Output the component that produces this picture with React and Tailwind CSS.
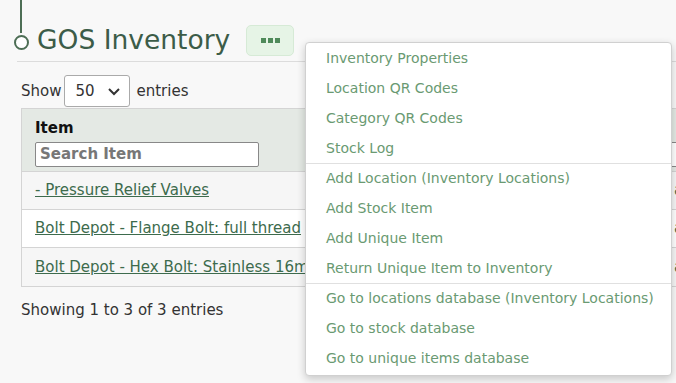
import React from "react";

const font = { fontFamily: "'DejaVu Sans', sans-serif" };

function MenuItem({ children }) {
  return (
    <div className="h-[29.75px] flex items-center pl-[20px] text-[14px] text-[#6a9a72] whitespace-nowrap">
      {children}
    </div>
  );
}

export default function App() {
  return (
    <div className="relative w-[676px] h-[383px] overflow-hidden bg-[#f8f8f8] text-[#333]" style={font}>
      {/* timeline line */}
      <div className="absolute left-[20px] top-0 w-[2px] h-[33px] bg-[#4d6e55]" />
      <div className="pl-[14px] pt-[22px]">
        <div className="flex items-center">
          <div className="w-[15px] h-[15px] rounded-full border-2 border-[#4d6e55] bg-white mt-[4px]" />
          <h1 className="ml-[8px] text-[26.5px] leading-[36px] text-[#3c5c48]">GOS Inventory</h1>
          <button className="ml-[16px] w-[48px] h-[31px] rounded-[5px] bg-[#e6f4e6] border border-[#d6ead6] flex items-center justify-center gap-[2px]">
            <span className="w-[5px] h-[5px] bg-[#4f8a5a]" />
            <span className="w-[5px] h-[5px] bg-[#4f8a5a]" />
            <span className="w-[5px] h-[5px] bg-[#4f8a5a]" />
          </button>
        </div>
        <div className="ml-[3px] mt-[3px] h-px bg-[#dcdcdc]" />
      </div>

      <div className="pl-[21px] mt-[13px] flex items-center text-[15px]">
        <span>Show</span>
        <div className="ml-[3px] w-[66px] h-[32px] rounded-[3px] border border-[#aaa] bg-white flex items-center pl-[10px] pr-[8px] justify-between">
          <span>50</span>
          <svg width="14" height="9" viewBox="0 0 14 9"><path d="M2 2 L7 7 L12 2" fill="none" stroke="#333" strokeWidth="2" /></svg>
        </div>
        <span className="ml-[6px]">entries</span>
      </div>

      {/* table */}
      <div className="ml-[21px] mt-px w-[700px] border border-[#d4d4d4] text-[15px]">
        <div className="flex h-[63px] bg-[#e4e9e4] border-b border-[#d4d4d4]">
          <div className="w-[639px] pl-[13px] pt-[9px] border-r border-[#d4d4d4]">
            <div className="font-bold text-[#111] leading-[20px]">Item</div>
            <div className="mt-[4px] w-[224px] h-[25px] rounded-[2px] border border-[#888] bg-white pl-[4px] flex items-center text-[#777] font-semibold">Search Item</div>
          </div>
          <div className="pl-[13px] pt-[9px]">
            <div className="font-bold text-[#111] leading-[20px]">c</div>
            <div className="mt-[4px] w-[100px] h-[25px] border border-[#888] bg-white" />
          </div>
        </div>
        {["- Pressure Relief Valves", "Bolt Depot - Flange Bolt: full thread", "Bolt Depot - Hex Bolt: Stainless 16mm"].map((t, i) => (
          <div key={i} className={`flex h-[38px] items-center ${i % 2 === 0 ? "bg-[#f6f6f6]" : "bg-white"} ${i < 2 ? "border-b border-[#d4d4d4]" : ""}`}>
            <div className="w-[639px] pl-[13px] whitespace-nowrap overflow-hidden">
              <span className="underline text-[#3d6b4d]">{t}</span>
            </div>
            <div className="pl-[13px] text-[#3d6b4d]">a</div>
          </div>
        ))}
      </div>

      <div className="pl-[21px] mt-[12px] text-[15px]">Showing 1 to 3 of 3 entries</div>

      {/* dropdown menu */}
      <div className="absolute left-[305px] top-[42px] w-[367px] pt-px pb-[2px] bg-white rounded-[4px] border border-[#d0d0d0] shadow-[0_3px_8px_rgba(0,0,0,0.2)]">
        <MenuItem>Inventory Properties</MenuItem>
        <MenuItem>Location QR Codes</MenuItem>
        <MenuItem>Category QR Codes</MenuItem>
        <MenuItem>Stock Log</MenuItem>
        <div className="h-px bg-[#e0e0e0]" />
        <MenuItem>Add Location (Inventory Locations)</MenuItem>
        <MenuItem>Add Stock Item</MenuItem>
        <MenuItem>Add Unique Item</MenuItem>
        <MenuItem>Return Unique Item to Inventory</MenuItem>
        <div className="h-px bg-[#e0e0e0]" />
        <MenuItem>Go to locations database (Inventory Locations)</MenuItem>
        <MenuItem>Go to stock database</MenuItem>
        <MenuItem>Go to unique items database</MenuItem>
      </div>
    </div>
  );
}
